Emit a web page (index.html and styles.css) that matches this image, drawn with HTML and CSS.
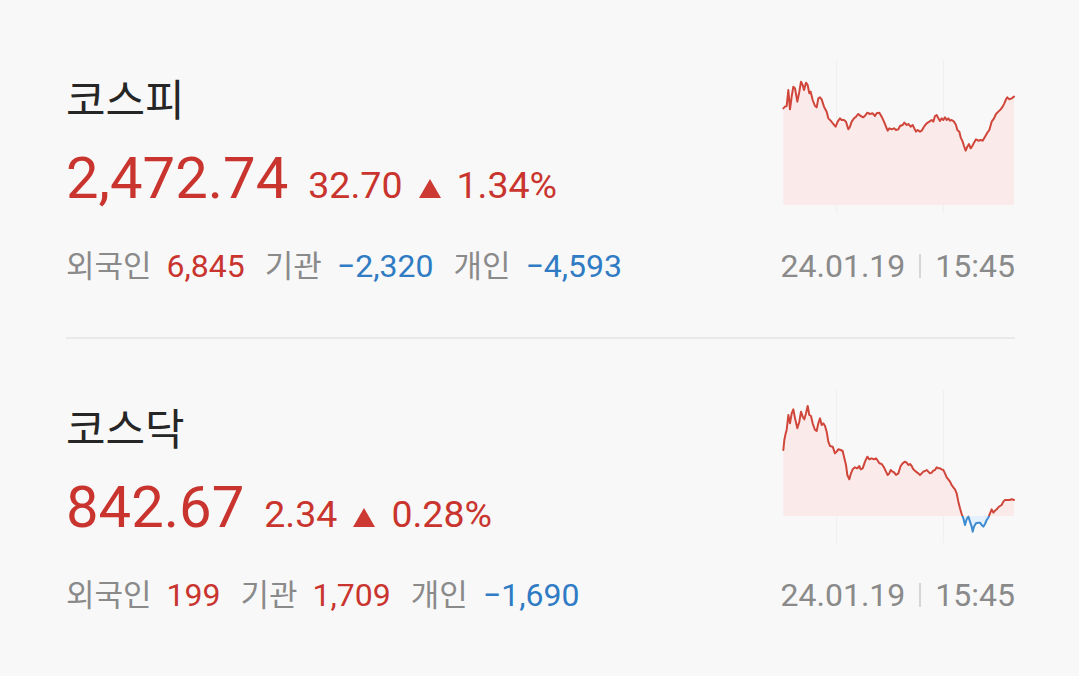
FILE: index.html
```html
<!DOCTYPE html>
<html lang="ko">
<head>
<meta charset="utf-8">
<title>국내 지수</title>
<link rel="stylesheet" href="styles.css">
</head>
<body>
<main class="index-list">
  <section class="index-row">
    <div class="index-info">
      <h2 class="index-name">코스피</h2>
      <div class="index-price">
        <span class="price up">2,472.74</span>
        <span class="change up">32.70</span>
        <svg class="tri" viewBox="0 0 22 19" aria-hidden="true"><path d="M11 0 L22 19 L0 19 Z"/></svg>
        <span class="change up">1.34%</span>
      </div>
      <div class="investors">
        <span class="label">외국인</span><span class="value up">6,845</span>
        <span class="label">기관</span><span class="value down">−2,320</span>
        <span class="label">개인</span><span class="value down">−4,593</span>
      </div>
    </div>
    <div class="index-chart">
      <svg class="spark" width="232" height="169" viewBox="39 51 696 507" aria-hidden="true">
        <defs>
          <clipPath id="k1-up"><rect x="0" y="0" width="800" height="435"/></clipPath>
        </defs>
        <line class="grid" x1="200" y1="0" x2="200" y2="460"/>
        <line class="grid" x1="520" y1="0" x2="520" y2="460"/>
        <path class="area-up" clip-path="url(#k1-up)" d="M40,145 L45,140 L50,138 L55,90 L60,148 L65,110 L70,80 L75,85 L82,125 L88,95 L93,65 L98,75 L102,90 L108,68 L113,75 L118,100 L122,95 L128,120 L135,138 L140,142 L145,115 L150,112 L155,118 L162,140 L170,155 L175,175 L182,182 L190,192 L197,200 L203,185 L210,175 L215,180 L222,180 L228,185 L235,208 L240,200 L245,185 L252,175 L258,170 L265,162 L272,168 L280,172 L287,165 L292,158 L300,162 L308,160 L315,168 L320,160 L328,158 L335,170 L342,185 L348,200 L353,212 L358,205 L365,208 L372,205 L378,210 L385,208 L390,198 L398,195 L403,188 L410,195 L415,192 L422,200 L428,195 L433,205 L438,215 L443,210 L450,215 L455,212 L462,200 L470,190 L478,185 L485,180 L490,185 L495,168 L500,165 L505,175 L510,183 L515,175 L520,180 L525,172 L530,180 L535,175 L540,182 L545,180 L552,185 L558,195 L562,210 L568,215 L572,232 L578,245 L582,258 L587,272 L592,260 L597,252 L602,265 L607,258 L612,248 L618,238 L625,242 L632,240 L638,242 L645,230 L652,218 L658,210 L665,185 L672,175 L678,162 L685,155 L692,148 L698,140 L703,130 L708,118 L712,112 L718,118 L725,115 L732,110 L732,435 L40,435 Z"/>
        <path class="line-up" d="M40,145 L45,140 L50,138 L55,90 L60,148 L65,110 L70,80 L75,85 L82,125 L88,95 L93,65 L98,75 L102,90 L108,68 L113,75 L118,100 L122,95 L128,120 L135,138 L140,142 L145,115 L150,112 L155,118 L162,140 L170,155 L175,175 L182,182 L190,192 L197,200 L203,185 L210,175 L215,180 L222,180 L228,185 L235,208 L240,200 L245,185 L252,175 L258,170 L265,162 L272,168 L280,172 L287,165 L292,158 L300,162 L308,160 L315,168 L320,160 L328,158 L335,170 L342,185 L348,200 L353,212 L358,205 L365,208 L372,205 L378,210 L385,208 L390,198 L398,195 L403,188 L410,195 L415,192 L422,200 L428,195 L433,205 L438,215 L443,210 L450,215 L455,212 L462,200 L470,190 L478,185 L485,180 L490,185 L495,168 L500,165 L505,175 L510,183 L515,175 L520,180 L525,172 L530,180 L535,175 L540,182 L545,180 L552,185 L558,195 L562,210 L568,215 L572,232 L578,245 L582,258 L587,272 L592,260 L597,252 L602,265 L607,258 L612,248 L618,238 L625,242 L632,240 L638,242 L645,230 L652,218 L658,210 L665,185 L672,175 L678,162 L685,155 L692,148 L698,140 L703,130 L708,118 L712,112 L718,118 L725,115 L732,110"/>
      </svg>
      <div class="stamp">
        <span>24.01.19</span><span class="bar"></span><span>15:45</span>
      </div>
    </div>
  </section>

  <section class="index-row">
    <div class="index-info">
      <h2 class="index-name">코스닥</h2>
      <div class="index-price">
        <span class="price up">842.67</span>
        <span class="change up">2.34</span>
        <svg class="tri" viewBox="0 0 22 19" aria-hidden="true"><path d="M11 0 L22 19 L0 19 Z"/></svg>
        <span class="change up">0.28%</span>
      </div>
      <div class="investors">
        <span class="label">외국인</span><span class="value up">199</span>
        <span class="label">기관</span><span class="value up">1,709</span>
        <span class="label">개인</span><span class="value down">−1,690</span>
      </div>
    </div>
    <div class="index-chart">
      <svg class="spark" width="232" height="169" viewBox="39 48 696 507" aria-hidden="true">
        <defs>
          <clipPath id="k2-up"><rect x="0" y="0" width="800" height="378"/></clipPath>
          <clipPath id="k2-down"><rect x="0" y="378" width="800" height="300"/></clipPath>
          <path id="k2-line" d="M40,180 L43,150 L47,130 L50,120 L55,75 L60,100 L65,70 L70,58 L75,85 L82,115 L88,95 L93,65 L98,80 L103,88 L108,70 L113,48 L118,75 L123,78 L128,100 L135,120 L140,123 L145,100 L150,85 L155,105 L160,100 L165,108 L170,125 L175,155 L180,168 L188,170 L195,190 L200,185 L205,178 L212,180 L218,183 L222,200 L228,225 L232,255 L238,268 L243,250 L248,238 L255,232 L262,235 L268,228 L272,238 L278,235 L285,215 L292,200 L298,208 L305,205 L312,208 L318,205 L322,210 L328,220 L335,222 L342,232 L348,245 L353,255 L358,250 L362,240 L368,245 L373,248 L378,255 L385,250 L392,228 L398,220 L405,215 L410,218 L415,225 L420,222 L425,228 L430,238 L438,245 L445,250 L450,255 L455,250 L460,245 L465,243 L470,240 L475,245 L480,250 L485,248 L490,242 L495,240 L500,232 L505,235 L510,235 L515,238 L520,240 L525,250 L530,262 L535,268 L540,275 L545,285 L550,292 L555,298 L560,310 L565,335 L570,355 L575,372 L580,385 L585,405 L590,388 L595,380 L600,395 L605,410 L608,425 L612,410 L618,400 L625,398 L630,398 L635,405 L640,410 L645,402 L650,390 L655,383 L660,370 L665,358 L670,368 L675,362 L680,358 L685,352 L690,348 L695,345 L700,335 L705,330 L710,330 L718,330 L725,328 L732,330"/>
          <path id="k2-area" d="M40,180 L43,150 L47,130 L50,120 L55,75 L60,100 L65,70 L70,58 L75,85 L82,115 L88,95 L93,65 L98,80 L103,88 L108,70 L113,48 L118,75 L123,78 L128,100 L135,120 L140,123 L145,100 L150,85 L155,105 L160,100 L165,108 L170,125 L175,155 L180,168 L188,170 L195,190 L200,185 L205,178 L212,180 L218,183 L222,200 L228,225 L232,255 L238,268 L243,250 L248,238 L255,232 L262,235 L268,228 L272,238 L278,235 L285,215 L292,200 L298,208 L305,205 L312,208 L318,205 L322,210 L328,220 L335,222 L342,232 L348,245 L353,255 L358,250 L362,240 L368,245 L373,248 L378,255 L385,250 L392,228 L398,220 L405,215 L410,218 L415,225 L420,222 L425,228 L430,238 L438,245 L445,250 L450,255 L455,250 L460,245 L465,243 L470,240 L475,245 L480,250 L485,248 L490,242 L495,240 L500,232 L505,235 L510,235 L515,238 L520,240 L525,250 L530,262 L535,268 L540,275 L545,285 L550,292 L555,298 L560,310 L565,335 L570,355 L575,372 L580,385 L585,405 L590,388 L595,380 L600,395 L605,410 L608,425 L612,410 L618,400 L625,398 L630,398 L635,405 L640,410 L645,402 L650,390 L655,383 L660,370 L665,358 L670,368 L675,362 L680,358 L685,352 L690,348 L695,345 L700,335 L705,330 L710,330 L718,330 L725,328 L732,330 L732,378 L40,378 Z"/>
        </defs>
        <line class="grid" x1="200" y1="0" x2="200" y2="460"/>
        <line class="grid" x1="520" y1="0" x2="520" y2="460"/>
        <use href="#k2-area" class="area-up" clip-path="url(#k2-up)"/>
        <use href="#k2-area" class="area-down" clip-path="url(#k2-down)"/>
        <use href="#k2-line" class="line-up" clip-path="url(#k2-up)"/>
        <use href="#k2-line" class="line-down" clip-path="url(#k2-down)"/>
      </svg>
      <div class="stamp">
        <span>24.01.19</span><span class="bar"></span><span>15:45</span>
      </div>
    </div>
  </section>
</main>
</body>
</html>
```

FILE: styles.css
```css
html, body {
  margin: 0;
  padding: 0;
  background: #f8f8f8;
}

body {
  font-family: Roboto, "Noto Sans CJK KR", sans-serif;
  color: #222;
}

.index-list {
  padding: 10px 64px 0 66px;
}

.index-row {
  display: flex;
  justify-content: space-between;
  padding: 67px 0 51px;
}

.index-row + .index-row {
  border-top: 2px solid #e9e9e9;
}

.index-info {
  display: flex;
  flex-direction: column;
}

.index-name {
  margin: 0;
  font-weight: 400;
  font-size: 43px;
  line-height: 48px;
  color: #262626;
}

.index-price {
  display: flex;
  align-items: baseline;
  margin-top: 18px;
  height: 70px;
  line-height: 70px;
}

.price {
  font-size: 58px;
  margin-right: 20px;
}

.change {
  font-size: 37.5px;
}

.tri {
  width: 22px;
  height: 19px;
  margin: 0 16px;
  fill: #cc3a33;
}

.up { color: #c9352e; }
.down { color: #2f7bc4; }

.investors {
  display: flex;
  align-items: baseline;
  margin-top: 33px;
  height: 40px;
  line-height: 40px;
  font-size: 32px;
}

.investors .label {
  font-size: 31px;
  color: #8a8a8a;
  margin-right: 15px;
}

.investors .value {
  margin-right: 20px;
}

.index-chart {
  display: flex;
  flex-direction: column;
  align-items: flex-end;
  width: 232px;
}

.spark {
  display: block;
  overflow: visible;
}

.grid {
  stroke: #efefef;
  stroke-width: 3;
}

.area-up { fill: #fbeaea; }
.area-down { fill: #e4f0fb; }

.line-up,
.line-down {
  fill: none;
  stroke-width: 6;
  stroke-linejoin: round;
  stroke-linecap: round;
}

.line-up { stroke: #d0463a; }
.line-down { stroke: #3d8bd0; }

.stamp {
  display: flex;
  align-items: center;
  height: 40px;
  line-height: 40px;
  font-size: 32px;
  color: #8a8a8a;
}

.stamp .bar {
  width: 2px;
  height: 24px;
  margin: 0 14px;
  background: #d6d6d6;
}
```
